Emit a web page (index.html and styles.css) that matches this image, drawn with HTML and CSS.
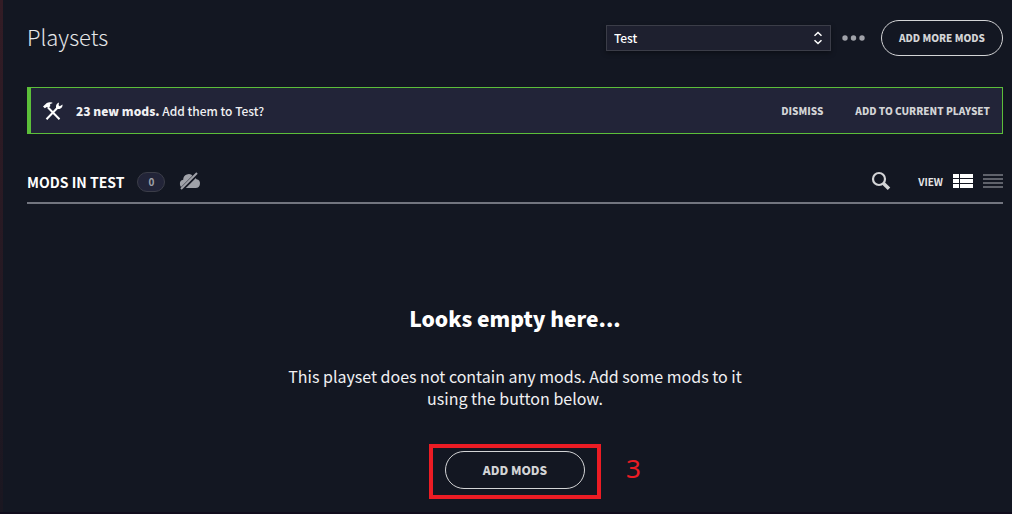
FILE: index.html
```html
<!DOCTYPE html>
<html lang="en">
<head>
  <meta charset="UTF-8">
  <title>Playsets</title>
  <meta name="viewport" content="width=device-width, initial-scale=1.0">
  <link rel="stylesheet" href="styles.css">
</head>
<body>

  <main class="page">
    <header class="topbar">
      <h1>Playsets</h1>
      <div class="playset-select">
        <select id="playset" aria-label="Playset">
          <option>Test</option>
        </select>
        <svg class="arrows" width="10" height="14" viewBox="0 0 10 14" fill="none" stroke="#fff" stroke-width="1.500">
          <path d="M1.500 4.800L5 1.500l3.500 3.300M1.500 9.200L5 12.500l3.500-3.300"/>
        </svg>
      </div>
      <button class="icon-btn more" aria-label="More options">
        <svg width="24" height="6" viewBox="0 0 24 6" fill="#a0a2a9">
          <circle cx="3" cy="3" r="2.700"/><circle cx="11.500" cy="3" r="2.700"/><circle cx="20" cy="3" r="2.700"/>
        </svg>
      </button>
      <button class="pill pill-small">ADD MORE MODS</button>
    </header>

    <section class="notice">
      <svg class="tools" width="20" height="20" viewBox="0 0 20 20">
        <path d="M5 6.500L16.500 18.300" stroke="#fff" stroke-width="2"/>
        <path d="M0 5.400L3.800 2Q6 .6 9.300 1.500L9.400 2.200Q7.400 2.500 6.900 3.700L7.400 5 5.400 7.100 3.800 5.900 1.800 7.200Z" fill="#fff"/>
        <path d="M3.500 18.300L14.500 6.800" stroke="#fff" stroke-width="2"/>
        <path d="M13 5.500Q12.900 2.600 16 1.400L15.600 4.200 16.800 5.200 19.500 3.500Q19.900 7 16.500 7.900L14.600 8 13 6.700Z" fill="#fff"/>
      </svg>
      <p><strong>23 new mods.</strong> Add them to Test?</p>
      <button class="text-btn">DISMISS</button>
      <button class="text-btn">ADD TO CURRENT PLAYSET</button>
    </section>

    <section class="list-head">
      <h2>MODS IN TEST</h2>
      <span class="count">0</span>
      <svg class="cloud" width="22" height="18" viewBox="0 0 22 18">
        <path d="M5 16A4.200 4.200 0 0 1 4.200 7.700 5.500 5.500 0 0 1 14 4.200 5 5 0 0 1 17.500 7.300 4.400 4.400 0 0 1 16.500 16Z" fill="#a0a2a9"/>
        <path d="M2.500 17.500L18.500 1.500" stroke="#131722" stroke-width="4"/>
        <path d="M2 17L18 1" stroke="#a0a2a9" stroke-width="2"/>
      </svg>
      <button class="icon-btn search" aria-label="Search">
        <svg width="20" height="20" viewBox="0 0 20 20" fill="none" stroke="#d3d4d6">
          <circle cx="8" cy="8" r="6" stroke-width="2.200"/>
          <path d="M12.300 12.300L18 17.800" stroke-width="3.600"/>
        </svg>
      </button>
      <span class="view-label">VIEW</span>
      <button class="icon-btn" aria-label="Detailed view">
        <svg width="20" height="14" viewBox="0 0 20 14" fill="#fff">
          <path d="M0 0h6v4H0zM7 0h13v4H7zM0 5h6v4H0zM7 5h13v4H7zM0 10h6v4H0zM7 10h13v4H7z"/>
        </svg>
      </button>
      <button class="icon-btn" aria-label="Compact view">
        <svg width="20" height="14" viewBox="0 0 20 14" fill="#5f626b">
          <path d="M0 0h20v2H0zM0 4h20v2H0zM0 8h20v2H0zM0 12h20v2H0z"/>
        </svg>
      </button>
    </section>

    <section class="empty">
      <h3>Looks empty here...</h3>
      <p>This playset does not contain any mods. Add some mods to it using the button below.</p>
      <div class="step">
        <button class="pill pill-large">ADD MODS</button>
        <span class="step-number">3</span>
      </div>
    </section>
  </main>

</body>
</html>
```
FILE: styles.css
```css
* { margin: 0; padding: 0; box-sizing: border-box; }

body {
  min-height: 100vh;
  background: linear-gradient(#331c25, #1a1721) 0 0 / 3px 100% no-repeat #131722;
  border-bottom: 2px solid #100c1c;
  color: #fff;
  font-family: "Noto Sans CJK SC", "Noto Sans", sans-serif;
  font-size: 12px;
  line-height: 20px;
}

button, select { font: inherit; color: inherit; cursor: pointer; }
button { background: none; border: none; }
svg { display: block; }

.page { padding: 20px 9px 12px 27px; }

.topbar {
  display: flex;
  align-items: center;
}

h1 {
  flex: 1;
  padding-bottom: 4px;
  color: #e6e7e9;
  font-size: 22px;
  font-weight: 300;
  line-height: 32px;
}

.playset-select {
  position: relative;
  width: 225px;
}

.playset-select select {
  display: block;
  width: 100%;
  height: 26px;
  padding: 0 7px;
  appearance: none;
  background: #1e202f;
  border: 1px solid #3b3d48;
  box-shadow: 0 2px 5px rgba(0,0,0,0.4);
  font-weight: 500;
  line-height: 24px;
}

.arrows {
  position: absolute;
  right: 8px;
  top: 6px;
  pointer-events: none;
}

.more { margin: 0 15px 0 11px; }

.pill {
  border: 1px solid #d3d4d6;
  border-radius: 20px;
  color: #d3d4d6;
  font-weight: 900;
}

.pill-small {
  height: 36px;
  padding: 0 17px;
  font-size: 10px;
}

.pill-large {
  width: 140px;
  height: 38px;
  font-size: 12px;
}

.notice {
  display: flex;
  align-items: center;
  height: 47px;
  margin-top: 31px;
  padding: 0 12px;
  background: #222438;
  border: 1px solid #5cbf3a;
  border-left-width: 4px;
}

.notice p {
  flex: 1;
  margin-left: 13px;
  color: #f0f0f2;
  font-weight: 500;
}

.notice strong { font-weight: 900; }

.text-btn {
  margin-left: 32px;
  color: #d3d4d6;
  font-size: 10px;
  font-weight: 900;
}

.list-head {
  display: flex;
  align-items: center;
  height: 44px;
  margin-top: 26px;
  border-bottom: 2px solid #72757f;
}

h2 {
  padding-top: 2px;
  font-size: 14px;
}

.count {
  width: 28px;
  margin: 2px 14px 0 13px;
  background: #222438;
  border: 1px solid #3b3d48;
  border-radius: 10px;
  color: #a0a2a9;
  font-size: 10px;
  font-weight: bold;
  line-height: 18px;
  text-align: center;
}

.search { margin-left: auto; }

.view-label {
  margin-left: 27px;
  padding-top: 2px;
  color: #e6e7e9;
  font-size: 10px;
  font-weight: bold;
}

.view-label ~ .icon-btn { margin-left: 10px; }

.empty {
  display: flex;
  flex-direction: column;
  align-items: center;
  padding-top: 99px;
  text-align: center;
}

h3 {
  font-size: 21px;
  font-weight: 900;
  line-height: 30px;
}

.empty p {
  max-width: 480px;
  margin: 32px 0 42px;
  color: #f0f0f2;
  font-size: 16px;
  line-height: 22px;
}

/* walkthrough marker drawn around the button */
.step { position: relative; }

.step::before {
  content: "";
  position: absolute;
  inset: -7px -16px -10px;
  border: 4px solid #ec1c24;
  pointer-events: none;
}

.step-number {
  position: absolute;
  left: 100%;
  top: 0;
  margin-left: 41px;
  color: #ec1c24;
  font-family: "Noto Sans", sans-serif;
  font-size: 26px;
  line-height: 34px;
}
```
